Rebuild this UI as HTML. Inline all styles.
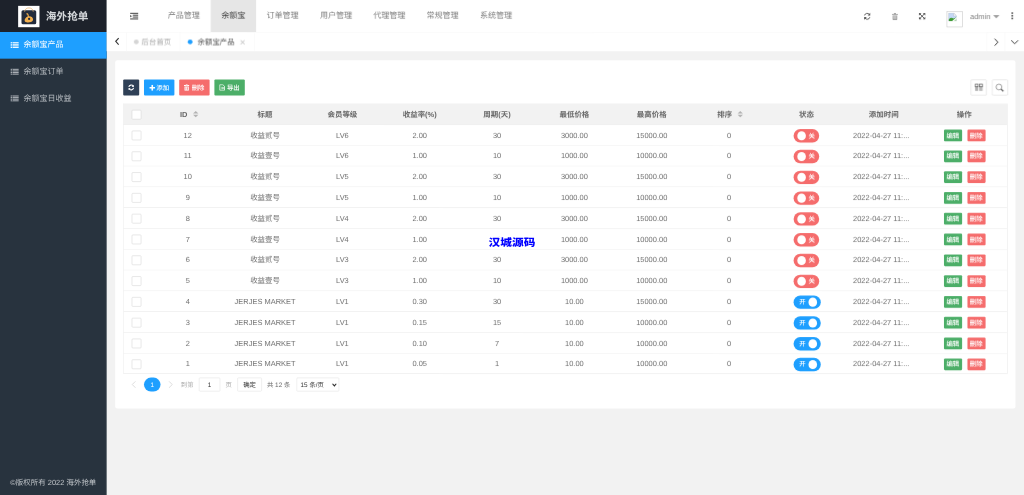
<!DOCTYPE html>
<html lang="zh-CN">
<head>
<meta charset="utf-8">
<title>海外抢单</title>
<style>
*{box-sizing:border-box;margin:0;padding:0}
html,body{width:1024px;height:495px;overflow:hidden;background:#f2f2f2}
body{text-rendering:geometricPrecision;font-family:"Liberation Sans","Noto Sans CJK SC",sans-serif;font-size:14px;color:#666;line-height:24px}
#stage{position:absolute;left:0;top:0;width:1930px;height:940px;transform:scale(0.533333) rotate(0.005deg) translateZ(0);transform-origin:0 0;overflow:hidden}
a{color:inherit;text-decoration:none}
ul{list-style:none}
/* side */
.side{position:absolute;left:0;top:0;width:200px;height:940px;background:#28333e;color:#c2c6ca}
.logo{height:60px;background:#1d222b;position:relative}
.logo .pic{position:absolute;left:34px;top:11px;width:40px;height:40px;background:#fff}
.logo .pic svg{position:absolute;left:0;top:0}
.logo .txt{position:absolute;left:86px;top:2px;line-height:60px;font-size:20px;font-weight:bold;color:#d4d7da;letter-spacing:0}
.menu li{height:50px;line-height:50px;position:relative;font-size:15px;color:#b4b9be}
.menu li.on{background:#1e9fff;color:#fff}
.menu li i{position:absolute;left:20px;top:18.5px;width:15px;height:12px}
.menu li i:after{content:'';position:absolute;left:3.2px;top:0;width:0.8px;height:11.6px;background:#28333e}
.menu li.on i:after{background:#1e9fff}
.menu li i b{display:block;height:2.3px;margin-bottom:0.8px;background:currentColor;opacity:.92}
.menu li span{position:absolute;left:44px;top:0;white-space:nowrap}
.copy{position:absolute;left:0;top:893px;width:200px;text-align:center;font-size:14px;color:#c5c9cd;line-height:24px;white-space:nowrap}
/* header */
.hd{position:absolute;left:200px;top:0;width:1730px;height:61px;background:#fff;border-bottom:1px solid #f6f6f6}
.hd .nav{position:absolute;left:0;top:0;height:60px}
.hd .nav a{position:absolute;top:0;height:60px;line-height:60px;text-align:center;color:#7c7c7c;font-size:15px;white-space:nowrap}
.hd .nav a.on{background:#e6e6e6;color:#444}
.hd .ic{position:absolute;top:0;height:60px}
/* tabs */
.tabs{position:absolute;left:200px;top:61px;width:1730px;height:35px;background:#fff}
.tabs .ctl{position:absolute;top:0;width:38px;height:35px;border-left:1px solid #f6f6f6}
.tabs .ctl.l{left:0;border-left:0;border-right:1px solid #f6f6f6}
.tabs .tab{position:absolute;top:0;height:35px;line-height:35px;font-size:14px;color:#aaa;border-right:1px solid #f6f6f6;white-space:nowrap}
.tabs .tab .dot{position:absolute;top:12.6px;width:9px;height:9px;border-radius:50%;background:#d5d5d5}
.tabs .tab.on{color:#555}
.tabs .tab.on .dot{background:#1e9fff}
/* card */
.card{position:absolute;left:216px;top:113px;width:1688px;height:653px;border-radius:5px;background:#fff;border-radius:4px}
.btn{font-weight:500;position:absolute;top:36px;height:30px;line-height:30px;border-radius:2px;color:#fff;font-size:12px;text-align:center;white-space:nowrap}
.tool{position:absolute;top:36px;width:30px;height:30px;border:1px solid #d9d9d9;border-radius:2px;background:#fff}
/* table */
.tb{position:absolute;left:15px;top:81px;width:1658px;border:1px solid #e6e6e6;border-top:0;border-bottom:0}
.tr{position:relative;height:39px;border-bottom:1px solid #e6e6e6;background:#fff}
.tr.th{height:40px;background:#f2f2f2;color:#555;font-weight:bold;border-bottom:1px solid #e6e6e6}
.c{margin-left:-1.5px;position:absolute;top:0;height:38px;line-height:38px;text-align:center;white-space:nowrap;font-size:14px;color:#6e6e6e}
.th .c{color:#666;font-size:14px}
.ck{position:absolute;left:15px;top:11px;width:18px;height:18px;border:1px solid #d4d4d4;border-radius:2px;background:#fff}
.sort{display:inline-block;position:relative;width:10px;height:12px;margin-left:10px;vertical-align:-1px}
.sort:before,.sort:after{content:"";position:absolute;left:0;border:5px solid transparent}
.sort:before{top:-5px;border-bottom-color:#b2b2b2}
.sort:after{top:7px;border-top-color:#b2b2b2}
.sw{position:absolute;top:8.2px;left:48.5px;width:48px;height:24.5px;border-radius:12.5px;color:#fff;font-size:12px;line-height:24px}
.sw.off{background:#f56c6c}
.sw.on{background:#1e9fff;width:50.5px}
.sw i{position:absolute;top:4px;width:16.5px;height:16.5px;border-radius:50%;background:#fff}
.sw.off i{left:6.5px}.sw.on i{right:6.5px}
.sw em{position:absolute;top:0;font-style:normal;font-weight:500}
.sw.off em{left:28px}.sw.on em{left:10.4px}
.xs{font-weight:500;position:absolute;top:9.4px;height:22px;line-height:22px;width:34px;border-radius:2px;color:#fff;font-size:12px;text-align:center}
.xs.g{background:#4cae68;left:40px}
.xs.r{background:#f56c6c;left:84px}
/* page */
.pg{position:absolute;left:14px;top:594.5px;height:26px;font-size:12px;color:#888;line-height:26px}
.pg>*{position:absolute;top:0;white-space:nowrap}
#wm{transform:scaleY(0.88);position:absolute;left:0;top:234px;width:1024px;text-align:center;font-size:11.7px;font-weight:900;color:#0000ff;line-height:18px;letter-spacing:0;text-shadow:-1px -1px 0 #fff,1px -1px 0 #fff,-1px 1px 0 #fff,1px 1px 0 #fff,0 -1px 0 #fff,0 1px 0 #fff,-1px 0 0 #fff,1px 0 0 #fff}
.tr:last-child{height:38px}
</style>
</head>
<body>
<div id="stage">

<div class="side">
  <div class="logo">
    <div class="pic"><svg width="40" height="40" viewBox="0 0 40 40"><rect x="6.3" y="8.2" width="27.6" height="26.4" rx="3" fill="#232c3d"/><path d="M12.2 11 C12.2 1.5 28.3 1.5 28.3 11" fill="none" stroke="#e9b878" stroke-width="1.4"/><path d="M15.5 14.2 C17.5 13.6 19 14.6 19.6 16.5 L20.2 19.5 C25 19.3 28.2 21.8 28 25.6 C27.8 29.4 24 31.2 20.5 30.6 C18.5 31.4 13.5 31.6 12.3 28.6 C11.5 25.5 14 21.5 18 20 L17.6 17.2 C17.2 16 16.3 15.6 15.3 15.8 Z" fill="#f3b04e"/><circle cx="20.6" cy="24.4" r="2.1" fill="#232c3d"/></svg></div>
    <div class="txt">海外抢单</div>
  </div>
  <ul class="menu">
    <li class="on"><i><b></b><b></b><b></b><b></b></i><span>余额宝产品</span></li>
    <li><i><b></b><b></b><b></b><b></b></i><span>余额宝订单</span></li>
    <li><i><b></b><b></b><b></b><b></b></i><span>余额宝日收益</span></li>
  </ul>
  <div class="copy">©版权所有 2022 海外抢单</div>
</div>

<div class="hd">
  <div class="nav">
    <a style="left:94.5px;width:100px">产品管理</a>
    <a class="on" style="left:195px;width:85px">余额宝</a>
    <a style="left:280px;width:100px">订单管理</a>
    <a style="left:380px;width:100px">用户管理</a>
    <a style="left:480px;width:100px">代理管理</a>
    <a style="left:580px;width:100px">常规管理</a>
    <a style="left:680px;width:100px">系统管理</a>
  </div>
  <!-- fold icon -->
  <svg class="ic" style="left:42px" width="20" height="60" viewBox="0 0 20 60"><g fill="#4c4c4c"><rect x="2" y="24" width="15" height="2"/><rect x="7" y="27.5" width="10" height="2"/><rect x="7" y="31" width="10" height="2"/><rect x="2" y="34.5" width="15" height="2"/><path d="M2 27.7 L5.3 30.25 L2 32.8 Z"/></g></svg>
  <!-- refresh -->
  <svg class="ic" style="left:1416px" width="20" height="60" viewBox="0 0 20 60"><g transform="translate(10 30.5) scale(0.84) translate(-10 -30)"><g fill="none" stroke="#555" stroke-width="2.1"><path d="M4 28 A6.2 6.2 0 0 1 15 26"/><path d="M16 32 A6.2 6.2 0 0 1 5 34"/></g><path d="M16.8 22.4 L16.8 28.3 L10.9 28.3 Z" fill="#555"/><path d="M3.2 37.6 L3.2 31.7 L9.1 31.7 Z" fill="#555"/></g></svg>
  <!-- trash -->
  <svg class="ic" style="left:1467.5px" width="20" height="60" viewBox="0 0 20 60"><g transform="translate(10 30.5) scale(0.8) translate(-10 -30)"><g fill="#a2a2a2"><rect x="3" y="24.5" width="14" height="2.2"/><rect x="7.5" y="22.3" width="5" height="2.4"/><path d="M4.5 28 H15.5 V37 Q15.5 38.5 14 38.5 H6 Q4.5 38.5 4.5 37 Z"/></g><g fill="#fff" opacity=".8"><rect x="7" y="29.5" width="1.2" height="6.5"/><rect x="9.4" y="29.5" width="1.2" height="6.5"/><rect x="11.8" y="29.5" width="1.2" height="6.5"/></g></g></svg>
  <!-- fullscreen -->
  <svg class="ic" style="left:1519px" width="20" height="60" viewBox="0 0 20 60"><g transform="translate(10 30.3) scale(0.8) translate(-10 -30)"><g stroke="#555" stroke-width="2.2" fill="none"><path d="M5 25 L15 35 M15 25 L5 35"/></g><g fill="#555"><path d="M2.5 22.5 H8.5 L2.5 28.5 Z"/><path d="M17.5 22.5 V28.5 L11.5 22.5 Z"/><path d="M2.5 37.5 V31.5 L8.5 37.5 Z"/><path d="M17.5 37.5 H11.5 L17.5 31.5 Z"/></g></g></svg>
  <!-- broken image -->
  <div style="position:absolute;left:1575px;top:21px;width:30px;height:30px;border:1px solid #c4c4c4;background:#fff">
    <svg style="position:absolute;left:2px;top:2px" width="16" height="16" viewBox="0 0 16 16"><path d="M0.5 0.5 H10 L15.5 6 V15.5 H0.5Z" fill="#c4d8f6" stroke="#b4bccb" stroke-width="1"/><path d="M10 0.5 V6 H15.5Z" fill="#fff" stroke="#b4bccb" stroke-width="1"/><path d="M1 15.5 V12 Q5 7.5 10 10.5 L15 8.5 V15.5Z" fill="#3f9a35"/><path d="M7.5 16.5 L16.5 8.5" stroke="#fff" stroke-width="2.2"/><path d="M10 14 L16 9 V16 H10Z" fill="#fff" opacity=".6"/></svg>
  </div>
  <div style="position:absolute;left:1619px;top:0;line-height:60px;font-size:14px;color:#808080">admin</div>
  <div style="position:absolute;left:1661.5px;top:27.5px;border:6.5px solid transparent;border-top-color:#a0a0a0;border-bottom:0"></div>
  <svg class="ic" style="left:1691px" width="14" height="60" viewBox="0 0 14 60"><g fill="#505050"><rect x="5.5" y="23" width="3" height="3"/><rect x="5.5" y="28" width="3" height="3"/><rect x="5.5" y="33" width="3" height="3"/></g></svg>
</div>

<div class="tabs">
  <div class="ctl l"><svg width="36" height="35" viewBox="0 0 36 35"><path d="M22.5 10.5 L17 16.5 L22.5 22.5" fill="none" stroke="#333" stroke-width="2.1"/></svg></div>
  <div class="tab" style="left:38px;width:100px"><i class="dot" style="left:12.6px"></i><span style="position:absolute;left:27px">后台首页</span></div>
  <div class="tab on" style="left:138px;width:140px"><i class="dot" style="left:14.4px"></i><span style="position:absolute;left:32px">余额宝产品</span><span style="position:absolute;left:111.5px;top:1.5px;color:#c8c8c8;font-size:19px">×</span></div>
  <div class="ctl" style="left:1650px;width:34px"><svg width="36" height="35" viewBox="0 0 36 35"><path d="M14 11.5 L20 18 L14 24.5" fill="none" stroke="#333" stroke-width="1.8"/></svg></div>
  <div class="ctl" style="left:1684px;width:36px"><svg width="36" height="35" viewBox="0 0 36 35"><path d="M11 14.5 L17.5 21 L24 14.5" fill="none" stroke="#333" stroke-width="1.8"/></svg></div>
</div>

<div class="card">
  <div class="btn" style="left:15px;width:30px;background:#2f4056"><svg width="30" height="30" viewBox="0 0 30 30"><g transform="translate(15 15) scale(0.9) translate(-15 -15)"><g fill="none" stroke="#fff" stroke-width="2.3"><path d="M10 14 A5.2 5.2 0 0 1 19.5 12.5"/><path d="M20 16 A5.2 5.2 0 0 1 10.5 17.5"/></g><path d="M20.5 9.5 V14 H16 Z" fill="#fff"/><path d="M9.5 20.5 V16 H14 Z" fill="#fff"/></g></svg></div>
  <div class="btn" style="left:54px;width:57px;background:#1e9fff"><svg width="11" height="11" viewBox="0 0 11 11" style="vertical-align:-1.5px;margin-right:2px"><path d="M4 0h3v4h4v3H7v4H4V7H0V4h4z" fill="#fff"/></svg>添加</div>
  <div class="btn" style="left:120px;width:57px;background:#f56c6c"><svg width="10" height="12" viewBox="0 0 10 12" style="vertical-align:-2px;margin-right:4px"><path fill="#fff" fill-rule="evenodd" d="M0 1.6h10v1.7H0zM3.3 0h3.4v1.7H3.3zM1 4.2h8V12H1zM3 5.5v5h1.2v-5zM5.8 5.5v5H7v-5z"/></svg>删除</div>
  <div class="btn" style="left:186px;width:57px;background:#4cae68"><svg width="11" height="12" viewBox="0 0 11 12" style="vertical-align:-2px;margin-right:3px"><path d="M1 0.8 H7 L10 3.8 V11.2 H1 Z M3 7 H8 M6 4.8 L8.2 7 L6 9.2" fill="none" stroke="#fff" stroke-width="1.5"/></svg>导出</div>

  <div class="tool" style="left:1604px"><svg width="28" height="28" viewBox="0 0 28 28"><g fill="none" stroke="#555" stroke-width="1.3"><rect x="7.6" y="7.6" width="5.3" height="5"/><rect x="15.6" y="7.6" width="5.3" height="5"/><path stroke-width="0.9" d="M8.2 12.6 V20.3 M10.25 12.6 V20.3 M12.3 12.6 V20.3 M16.2 12.6 V20.3 M18.25 12.6 V20.3 M20.3 12.6 V20.3"/></g></svg></div>
  <div class="tool" style="left:1644px"><svg width="28" height="28" viewBox="0 0 28 28"><circle cx="12" cy="13" r="5.4" fill="none" stroke="#7a7a7a" stroke-width="1.3"/><path d="M16 17 L20.3 21.2" stroke="#666" stroke-width="2.4"/></svg></div>

  <div class="tb" id="tb">
    <div class="tr th">
      <span class="ck" style="top:11.5px"></span>
      <div class="c" style="left:51px;width:146px;line-height:40px">ID<i class="sort"></i></div>
      <div class="c" style="left:194px;width:145px;line-height:40px">标题</div>
      <div class="c" style="left:339px;width:145px;line-height:40px">会员等级</div>
      <div class="c" style="left:484px;width:145px;line-height:40px">收益率(%)</div>
      <div class="c" style="left:629px;width:145px;line-height:40px">周期(天)</div>
      <div class="c" style="left:774px;width:145px;line-height:40px">最低价格</div>
      <div class="c" style="left:919px;width:145px;line-height:40px">最高价格</div>
      <div class="c" style="left:1066px;width:145px;line-height:40px">排序<i class="sort"></i></div>
      <div class="c" style="left:1209px;width:145px;line-height:40px">状态</div>
      <div class="c" style="left:1354px;width:145px;line-height:40px">添加时间</div>
      <div class="c" style="left:1499px;width:157px;line-height:40px">操作</div>
    </div>
    <div class="tr"><span class="ck"></span><div class="c" style="left:48.5px;width:146px">12</div><div class="c" style="left:194px;width:145px">收益贰号</div><div class="c" style="left:339px;width:145px">LV6</div><div class="c" style="left:484px;width:145px">2.00</div><div class="c" style="left:629px;width:145px">30</div><div class="c" style="left:774px;width:145px">3000.00</div><div class="c" style="left:919px;width:145px">15000.00</div><div class="c" style="left:1064px;width:145px">0</div><div class="c" style="left:1209px;width:145px"><span class="sw off"><i></i><em>关</em></span></div><div class="c" style="left:1369px;width:130px;text-align:left">2022-04-27 11:...</div><div class="c" style="left:1499px;width:157px"><span class="xs g">编辑</span><span class="xs r">删除</span></div></div>
    <div class="tr"><span class="ck"></span><div class="c" style="left:48.5px;width:146px">11</div><div class="c" style="left:194px;width:145px">收益壹号</div><div class="c" style="left:339px;width:145px">LV6</div><div class="c" style="left:484px;width:145px">1.00</div><div class="c" style="left:629px;width:145px">10</div><div class="c" style="left:774px;width:145px">1000.00</div><div class="c" style="left:919px;width:145px">10000.00</div><div class="c" style="left:1064px;width:145px">0</div><div class="c" style="left:1209px;width:145px"><span class="sw off"><i></i><em>关</em></span></div><div class="c" style="left:1369px;width:130px;text-align:left">2022-04-27 11:...</div><div class="c" style="left:1499px;width:157px"><span class="xs g">编辑</span><span class="xs r">删除</span></div></div>
    <div class="tr"><span class="ck"></span><div class="c" style="left:48.5px;width:146px">10</div><div class="c" style="left:194px;width:145px">收益贰号</div><div class="c" style="left:339px;width:145px">LV5</div><div class="c" style="left:484px;width:145px">2.00</div><div class="c" style="left:629px;width:145px">30</div><div class="c" style="left:774px;width:145px">3000.00</div><div class="c" style="left:919px;width:145px">15000.00</div><div class="c" style="left:1064px;width:145px">0</div><div class="c" style="left:1209px;width:145px"><span class="sw off"><i></i><em>关</em></span></div><div class="c" style="left:1369px;width:130px;text-align:left">2022-04-27 11:...</div><div class="c" style="left:1499px;width:157px"><span class="xs g">编辑</span><span class="xs r">删除</span></div></div>
    <div class="tr"><span class="ck"></span><div class="c" style="left:48.5px;width:146px">9</div><div class="c" style="left:194px;width:145px">收益壹号</div><div class="c" style="left:339px;width:145px">LV5</div><div class="c" style="left:484px;width:145px">1.00</div><div class="c" style="left:629px;width:145px">10</div><div class="c" style="left:774px;width:145px">1000.00</div><div class="c" style="left:919px;width:145px">10000.00</div><div class="c" style="left:1064px;width:145px">0</div><div class="c" style="left:1209px;width:145px"><span class="sw off"><i></i><em>关</em></span></div><div class="c" style="left:1369px;width:130px;text-align:left">2022-04-27 11:...</div><div class="c" style="left:1499px;width:157px"><span class="xs g">编辑</span><span class="xs r">删除</span></div></div>
    <div class="tr"><span class="ck"></span><div class="c" style="left:48.5px;width:146px">8</div><div class="c" style="left:194px;width:145px">收益贰号</div><div class="c" style="left:339px;width:145px">LV4</div><div class="c" style="left:484px;width:145px">2.00</div><div class="c" style="left:629px;width:145px">30</div><div class="c" style="left:774px;width:145px">3000.00</div><div class="c" style="left:919px;width:145px">15000.00</div><div class="c" style="left:1064px;width:145px">0</div><div class="c" style="left:1209px;width:145px"><span class="sw off"><i></i><em>关</em></span></div><div class="c" style="left:1369px;width:130px;text-align:left">2022-04-27 11:...</div><div class="c" style="left:1499px;width:157px"><span class="xs g">编辑</span><span class="xs r">删除</span></div></div>
    <div class="tr"><span class="ck"></span><div class="c" style="left:48.5px;width:146px">7</div><div class="c" style="left:194px;width:145px">收益壹号</div><div class="c" style="left:339px;width:145px">LV4</div><div class="c" style="left:484px;width:145px">1.00</div><div class="c" style="left:629px;width:145px">10</div><div class="c" style="left:774px;width:145px">1000.00</div><div class="c" style="left:919px;width:145px">10000.00</div><div class="c" style="left:1064px;width:145px">0</div><div class="c" style="left:1209px;width:145px"><span class="sw off"><i></i><em>关</em></span></div><div class="c" style="left:1369px;width:130px;text-align:left">2022-04-27 11:...</div><div class="c" style="left:1499px;width:157px"><span class="xs g">编辑</span><span class="xs r">删除</span></div></div>
    <div class="tr"><span class="ck"></span><div class="c" style="left:48.5px;width:146px">6</div><div class="c" style="left:194px;width:145px">收益贰号</div><div class="c" style="left:339px;width:145px">LV3</div><div class="c" style="left:484px;width:145px">2.00</div><div class="c" style="left:629px;width:145px">30</div><div class="c" style="left:774px;width:145px">3000.00</div><div class="c" style="left:919px;width:145px">15000.00</div><div class="c" style="left:1064px;width:145px">0</div><div class="c" style="left:1209px;width:145px"><span class="sw off"><i></i><em>关</em></span></div><div class="c" style="left:1369px;width:130px;text-align:left">2022-04-27 11:...</div><div class="c" style="left:1499px;width:157px"><span class="xs g">编辑</span><span class="xs r">删除</span></div></div>
    <div class="tr"><span class="ck"></span><div class="c" style="left:48.5px;width:146px">5</div><div class="c" style="left:194px;width:145px">收益壹号</div><div class="c" style="left:339px;width:145px">LV3</div><div class="c" style="left:484px;width:145px">1.00</div><div class="c" style="left:629px;width:145px">10</div><div class="c" style="left:774px;width:145px">1000.00</div><div class="c" style="left:919px;width:145px">10000.00</div><div class="c" style="left:1064px;width:145px">0</div><div class="c" style="left:1209px;width:145px"><span class="sw off"><i></i><em>关</em></span></div><div class="c" style="left:1369px;width:130px;text-align:left">2022-04-27 11:...</div><div class="c" style="left:1499px;width:157px"><span class="xs g">编辑</span><span class="xs r">删除</span></div></div>
    <div class="tr"><span class="ck"></span><div class="c" style="left:48.5px;width:146px">4</div><div class="c" style="left:194px;width:145px">JERJES MARKET</div><div class="c" style="left:339px;width:145px">LV1</div><div class="c" style="left:484px;width:145px">0.30</div><div class="c" style="left:629px;width:145px">30</div><div class="c" style="left:774px;width:145px">10.00</div><div class="c" style="left:919px;width:145px">15000.00</div><div class="c" style="left:1064px;width:145px">0</div><div class="c" style="left:1209px;width:145px"><span class="sw on"><i></i><em>开</em></span></div><div class="c" style="left:1369px;width:130px;text-align:left">2022-04-27 11:...</div><div class="c" style="left:1499px;width:157px"><span class="xs g">编辑</span><span class="xs r">删除</span></div></div>
    <div class="tr"><span class="ck"></span><div class="c" style="left:48.5px;width:146px">3</div><div class="c" style="left:194px;width:145px">JERJES MARKET</div><div class="c" style="left:339px;width:145px">LV1</div><div class="c" style="left:484px;width:145px">0.15</div><div class="c" style="left:629px;width:145px">15</div><div class="c" style="left:774px;width:145px">10.00</div><div class="c" style="left:919px;width:145px">10000.00</div><div class="c" style="left:1064px;width:145px">0</div><div class="c" style="left:1209px;width:145px"><span class="sw on"><i></i><em>开</em></span></div><div class="c" style="left:1369px;width:130px;text-align:left">2022-04-27 11:...</div><div class="c" style="left:1499px;width:157px"><span class="xs g">编辑</span><span class="xs r">删除</span></div></div>
    <div class="tr"><span class="ck"></span><div class="c" style="left:48.5px;width:146px">2</div><div class="c" style="left:194px;width:145px">JERJES MARKET</div><div class="c" style="left:339px;width:145px">LV1</div><div class="c" style="left:484px;width:145px">0.10</div><div class="c" style="left:629px;width:145px">7</div><div class="c" style="left:774px;width:145px">10.00</div><div class="c" style="left:919px;width:145px">10000.00</div><div class="c" style="left:1064px;width:145px">0</div><div class="c" style="left:1209px;width:145px"><span class="sw on"><i></i><em>开</em></span></div><div class="c" style="left:1369px;width:130px;text-align:left">2022-04-27 11:...</div><div class="c" style="left:1499px;width:157px"><span class="xs g">编辑</span><span class="xs r">删除</span></div></div>
    <div class="tr"><span class="ck"></span><div class="c" style="left:48.5px;width:146px">1</div><div class="c" style="left:194px;width:145px">JERJES MARKET</div><div class="c" style="left:339px;width:145px">LV1</div><div class="c" style="left:484px;width:145px">0.05</div><div class="c" style="left:629px;width:145px">1</div><div class="c" style="left:774px;width:145px">10.00</div><div class="c" style="left:919px;width:145px">10000.00</div><div class="c" style="left:1064px;width:145px">0</div><div class="c" style="left:1209px;width:145px"><span class="sw on"><i></i><em>开</em></span></div><div class="c" style="left:1369px;width:130px;text-align:left">2022-04-27 11:...</div><div class="c" style="left:1499px;width:157px"><span class="xs g">编辑</span><span class="xs r">删除</span></div></div>
  </div>

  <div class="pg">
    <svg style="left:16px;top:5px" width="10" height="16" viewBox="0 0 10 16"><path d="M8 2 L2 8 L8 14" fill="none" stroke="#d2d2d2" stroke-width="1.4"/></svg>
    <span style="left:40px;top:0;width:31px;height:26px;border-radius:13px;background:#1e9fff;color:#fff;text-align:center">1</span>
    <svg style="left:85px;top:5px" width="10" height="16" viewBox="0 0 10 16"><path d="M2 2 L8 8 L2 14" fill="none" stroke="#d2d2d2" stroke-width="1.4"/></svg>
    <span style="left:109px;color:#a8a8a8">到第</span>
    <span style="left:143px;width:40px;height:26px;border:1px solid #e2e2e2;border-radius:2px;text-align:center;color:#333;line-height:24px">1</span>
    <span style="left:193px;color:#a8a8a8">页</span>
    <span style="left:215px;width:46px;height:26px;border:1px solid #e2e2e2;border-radius:2px;text-align:center;color:#333;line-height:24px">确定</span>
    <span style="left:270.5px;color:#666">共 12 条</span>
    <span style="left:325.5px;width:80.5px;height:26px;border:1px solid #e2e2e2;border-radius:2px;color:#333;line-height:24px;padding-left:7px">15 条/页<svg style="position:absolute;left:65px;top:9px" width="10" height="8" viewBox="0 0 10 8"><path d="M1.5 1.5 L5 5.5 L8.5 1.5" fill="none" stroke="#222" stroke-width="2"/></svg></span>
  </div>
</div>

</div>
<div id="wm">汉城源码</div>
</body>
</html>
